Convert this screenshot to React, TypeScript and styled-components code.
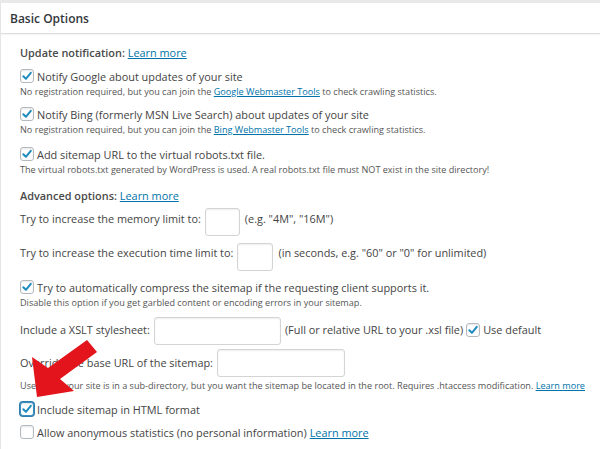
import React from "react";
import styled, { createGlobalStyle } from "styled-components";

const Global = createGlobalStyle`
  html, body { margin: 0; padding: 0; background: #fff; }
  body { font-family: "Open Sans", "Noto Sans", "DejaVu Sans", sans-serif; color: #444; }
  * { box-sizing: border-box; }
`;

const Page = styled.div`
  width: 600px;
  height: 449px;
  background: #e9e9e9;
  padding-top: 3px;
  overflow: hidden;
  position: relative;
`;

const Box = styled.div`
  background: #fff;
  height: 446px;
  border-left: 1px solid #e5e5e5;
`;

const Header = styled.div`
  height: 31px;
  display: flex;
  align-items: center;
  padding-left: 9px;
  border-bottom: 1px solid #dedede;
  box-shadow: 0 1px 1px rgba(0, 0, 0, 0.04);
  font-size: 12px;
  font-weight: 600;
  color: #32373c;
`;

const Body = styled.div`
  padding: 0 19px;
  display: flex;
  flex-direction: column;
  align-items: flex-start;
`;

const Title = styled.div<{ $mt: number }>`
  margin-top: ${(p) => p.$mt}px;
  line-height: 20px;
  font-size: 10.9px;
  font-weight: 600;
  color: #4a4a4a;
  white-space: nowrap;
`;

const Link = styled.a`
  color: #0073aa;
  text-decoration: underline;
  font-weight: 400;
  cursor: pointer;
`;

const CheckRow = styled.label<{ $mt: number }>`
  margin-top: ${(p) => p.$mt}px;
  display: flex;
  align-items: center;
  gap: 3px;
  height: 20px;
  font-size: 10.9px;
  color: #444;
  white-space: nowrap;
`;

const Box14 = styled.span<{ $focus?: boolean }>`
  width: 14px;
  height: 14px;
  flex: none;
  border: 1px solid ${(p) => (p.$focus ? "#3b8fbf" : "#b4b9be")};
  border-radius: 3px;
  background: #fff;
  box-shadow: ${(p) =>
    p.$focus
      ? "0 0 0 1px #2f7fae, inset 0 1px 2px rgba(0,0,0,0.1)"
      : "inset 0 1px 2px rgba(0,0,0,0.1)"};
  display: flex;
  align-items: center;
  justify-content: center;
`;

const Desc = styled.div<{ $mt: number }>`
  margin-top: ${(p) => p.$mt}px;
  line-height: 12px;
  font-size: 9.1px;
  color: #555;
  white-space: nowrap;
`;

const FieldRow = styled.div<{ $mt: number }>`
  margin-top: ${(p) => p.$mt}px;
  display: flex;
  align-items: flex-start;
  height: 28px;
  font-size: 10.9px;
  color: #444;
  white-space: nowrap;
`;

const FieldText = styled.span<{ $off: number; $ml?: number }>`
  margin-top: ${(p) => p.$off}px;
  margin-left: ${(p) => p.$ml ?? 0}px;
  line-height: 20px;
  display: flex;
  align-items: center;
  gap: 3px;
`;

const TextInput = styled.input<{ $w: number }>`
  width: ${(p) => p.$w}px;
  height: 28px;
  margin: 0 0 0 4px;
  padding: 2px 4px;
  border: 1px solid #d4d4d4;
  border-radius: 3px;
  background: #fff;
  box-shadow: inset 0 1px 2px rgba(0, 0, 0, 0.07);
  font-family: inherit;
  font-size: 11px;
  outline: none;
`;

const Overlay = styled.svg`
  position: absolute;
  left: 0;
  top: 0;
  pointer-events: none;
`;

function Check({ checked, focus }: { checked?: boolean; focus?: boolean }) {
  return (
    <Box14 $focus={focus}>
      {checked && (
        <svg width="12" height="12" viewBox="0 0 12 12">
          <path d="M2.3 6.2 L4.9 8.8 L9.8 2.8" fill="none" stroke="#1e8cbe" strokeWidth="2" strokeLinecap="round" strokeLinejoin="round" />
        </svg>
      )}
    </Box14>
  );
}

export default function App() {
  return (
    <>
      <Global />
      <Page>
        <Box>
          <Header>Basic Options</Header>
          <Body>
            <Title $mt={9}>
              Update notification: <Link>Learn more</Link>
            </Title>
            <CheckRow $mt={3}>
              <Check checked />
              Notify Google about updates of your site
            </CheckRow>
            <Desc $mt={0}>
              No registration required, but you can join the <Link>Google Webmaster Tools</Link> to check crawling statistics.
            </Desc>
            <CheckRow $mt={6}>
              <Check checked />
              Notify Bing (formerly MSN Live Search) about updates of your site
            </CheckRow>
            <Desc $mt={0}>
              No registration required, but you can join the <Link>Bing Webmaster Tools</Link> to check crawling statistics.
            </Desc>
            <CheckRow $mt={8}>
              <Check checked />
              Add sitemap URL to the virtual robots.txt file.
            </CheckRow>
            <Desc $mt={0}>
              The virtual robots.txt generated by WordPress is used. A real robots.txt file must NOT exist in the site directory!
            </Desc>
            <Title $mt={10}>
              Advanced options: <Link>Learn more</Link>
            </Title>
            <FieldRow $mt={2}>
              <FieldText $off={1}>Try to increase the memory limit to:</FieldText>
              <TextInput $w={35} readOnly />
              <FieldText $off={1} $ml={5}>(e.g. "4M", "16M")</FieldText>
            </FieldRow>
            <FieldRow $mt={7}>
              <FieldText $off={0}>Try to increase the execution time limit to:</FieldText>
              <TextInput $w={36} readOnly />
              <FieldText $off={0} $ml={5}>(in seconds, e.g. "60" or "0" for unlimited)</FieldText>
            </FieldRow>
            <CheckRow $mt={6}>
              <Check checked />
              Try to automatically compress the sitemap if the requesting client supports it.
            </CheckRow>
            <Desc $mt={0}>
              Disable this option if you get garbled content or encoding errors in your sitemap.
            </Desc>
            <FieldRow $mt={8}>
              <FieldText $off={3}>Include a XSLT stylesheet:</FieldText>
              <TextInput $w={127} readOnly />
              <FieldText $off={3} $ml={4}>
                (Full or relative URL to your .xsl file) <Check checked /> Use default
              </FieldText>
            </FieldRow>
            <FieldRow $mt={4}>
              <FieldText $off={4}>Override the base URL of the sitemap:</FieldText>
              <TextInput $w={128} readOnly />
            </FieldRow>
            <Desc $mt={3}>
              Use this if your site is in a sub-directory, but you want the sitemap be located in the root. Requires .htaccess modification. <Link>Learn more</Link>
            </Desc>
            <CheckRow $mt={7}>
              <Check checked focus />
              Include sitemap in HTML format
            </CheckRow>
            <CheckRow $mt={3}>
              <Check />
              Allow anonymous statistics (no personal information) <Link>Learn more</Link>
            </CheckRow>
          </Body>
        </Box>
        <Overlay width="600" height="449" viewBox="0 0 600 449">
          <polygon
            points="37,397 32,357 48,368 87,340 97,352 60,379 74,391"
            fill="#e3141b"
          />
        </Overlay>
      </Page>
    </>
  );
}
